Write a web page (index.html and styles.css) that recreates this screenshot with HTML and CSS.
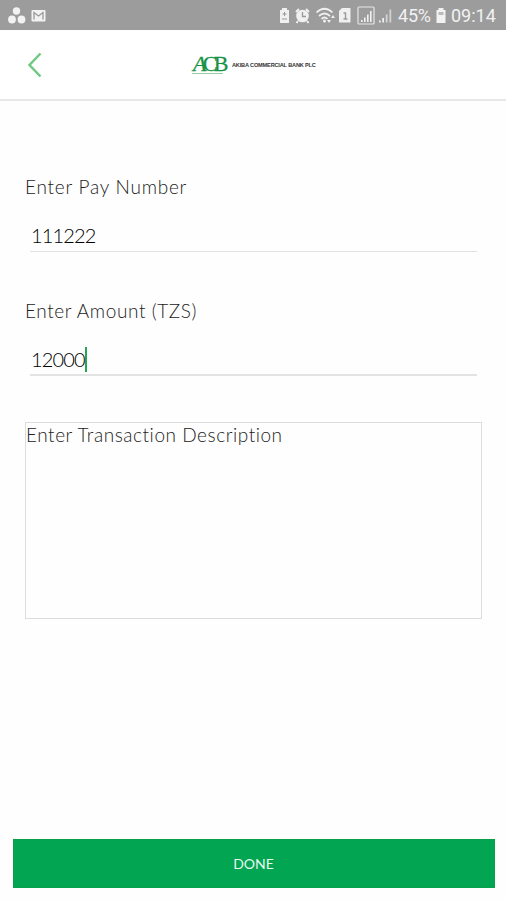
FILE: index.html
```html
<!DOCTYPE html>
<html lang="en">
<head>
<meta charset="utf-8">
<title>Payment</title>
<link rel="stylesheet" href="styles.css">
</head>
<body>
<div class="status">
  <svg class="notices" width="44" height="30" viewBox="0 0 44 30" fill="#f2f2f2">
    <circle cx="9.5" cy="11" r="3.7"/><circle cx="5" cy="19.500" r="3.900"/><circle cx="14.500" cy="19.500" r="3.900"/>
    <rect x="24.500" y="10" width="14" height="11.500" rx="1"/>
    <path d="M27 19.500V12.500L31.500 16L36 12.500V19.500" fill="none" stroke="#999" stroke-width="1.300"/>
  </svg>
  <svg class="radios" width="118" height="30" viewBox="276 0 118 30" fill="#f0f0f0">
    <path d="M282 8h5v2h2v13h-9V10h2z"/>
    <path d="M284.500 12v4m-2-2h4M282 19h5" stroke="#999" fill="none"/>
    <circle cx="302.500" cy="16" r="6.300"/><path d="M296 12l3-3M309 12l-3-3M298 21l-1.500 2M307 21l1.500 2" stroke="#f0f0f0" stroke-width="2"/>
    <path d="M302.500 12v4.500h3.500" fill="none" stroke="#999" stroke-width="1.300"/>
    <path d="M316.500 12.500Q324.500 5 332.500 12.500M319 16Q324.500 11 330 16M321.500 19Q324.500 16 327.500 19" fill="none" stroke="#f0f0f0" stroke-width="1.700"/>
    <circle cx="324.500" cy="21" r="1.500"/><path d="M327 20h4l-2 3zM331 18h4l-2-3z"/>
    <path d="M339 11l3-3h8.500v14.500H339z"/><path d="M343.500 13h2v6m-2 0h4" stroke="#999" stroke-width="1.400" fill="none"/>
    <rect x="358" y="7" width="16" height="17" rx="1" fill="none" stroke="#e5e5e5" stroke-width="1.200"/>
    <path d="M361 20h1.600v2H361zM364 17.500h1.600V22H364zM367 14.500h1.600V22H367zM370 11h1.600v11H370z"/>
    <path d="M379 20.500h1.700v2H379zM382.300 18h1.700v4.500h-1.700z"/><path d="M385.800 14.500h1.700v8h-1.700zM389.500 9.500h1.700v13h-1.700z" fill="#d4d4d4"/>
  </svg>
  <span class="percent">45%</span>
  <svg class="battery" width="12" height="30" viewBox="0 0 12 30"><path d="M3.500 8h5v2h2v13h-9V10h2z" fill="#f2f2f2"/><path d="M3.500 12h5v3h-5z" fill="#bbb"/></svg>
  <span class="clock">09:14</span>
</div>
<header class="header">
  <svg class="back" width="16" height="28" viewBox="0 0 16 28"><path d="M13.500 2.500L2.500 14L13.500 25.500" fill="none" stroke="#70c982" stroke-width="2.500"/></svg>
  <div class="brand">
    <div class="mark"><em>A</em>CB</div>
    <span class="bank">AKIBA COMMERCIAL BANK PLC</span>
  </div>
</header>
<main class="form">
  <label class="label pay">Enter Pay Number</label>
  <div class="field">111222</div>
  <label class="label amount">Enter Amount (TZS)</label>
  <div class="field active">12000<i class="caret"></i></div>
  <div class="description">Enter Transaction Description</div>
</main>
<button class="done">DONE</button>
</body>
</html>
```
FILE: styles.css
```css
* { box-sizing: border-box; }
body { margin: 0; width: 506px; height: 900px; display: flex; flex-direction: column; background: #fefefe; font-family: Lato, sans-serif; overflow: hidden; }
.status { height: 30px; flex: none; display: flex; align-items: center; background: #9c9c9c; color: #f2f2f2; font: 18px/30px Roboto, sans-serif; padding: 1px 0 0 7px; }
.status svg { flex: none; margin-top: -1px; }
.radios { margin-left: 225px; }
.percent { width: 34px; margin-left: 4px; white-space: nowrap; letter-spacing: -.2px; }
.battery { margin-left: 3px; }
.clock { margin-left: 4px; }
.header { height: 71px; flex: none; display: flex; align-items: center; border-bottom: 2px solid #e8e8e8; padding-left: 27px; background: #fff; }
.brand { display: flex; align-items: center; margin-left: 149px; }
.mark { width: 35px; height: 24px; color: #159344; font: 22px/22px "Liberation Serif", serif; -webkit-text-stroke: .3px #159344; letter-spacing: -3.700px; padding-left: 1px; background: linear-gradient(#9bcda4, #9bcda4) 0 20px / 31px 1px no-repeat; white-space: nowrap; }
.bank { font: bold 5.600px/8px "Liberation Sans", sans-serif; color: #333; margin-left: 5px; white-space: nowrap; letter-spacing: -.170px; }
.form { display: flex; flex-direction: column; padding: 73px 24px 0 25px; }
.label { font-weight: 300; font-size: 19px; line-height: 26px; color: #222; letter-spacing: .770px; }
.field { height: 32px; margin: 20px 5px 0; border-bottom: 1.500px solid #e2e2e2; padding-left: 1px; font-size: 20px; font-weight: 300; line-height: 30px; color: #000; letter-spacing: -.850px; display: flex; }
.amount { margin-top: 46px; letter-spacing: .600px; }
.active { border-bottom: 2px solid #e3e3e3; }
.caret { width: 2px; height: 25px; margin-top: 3px; background: #25a650; }
.description { height: 197px; margin-top: 46px; border: 1.500px solid #dcdcdc; font-size: 19px; font-weight: 300; line-height: 23px; color: #222; letter-spacing: .550px; }
.done { width: 482px; height: 49px; margin: auto 0 12px 12.500px; flex: none; border: 1px solid #08a04b; background: #02a552; color: #e8f8ed; font: 14px/20px Lato, sans-serif; padding: 0; }
```
